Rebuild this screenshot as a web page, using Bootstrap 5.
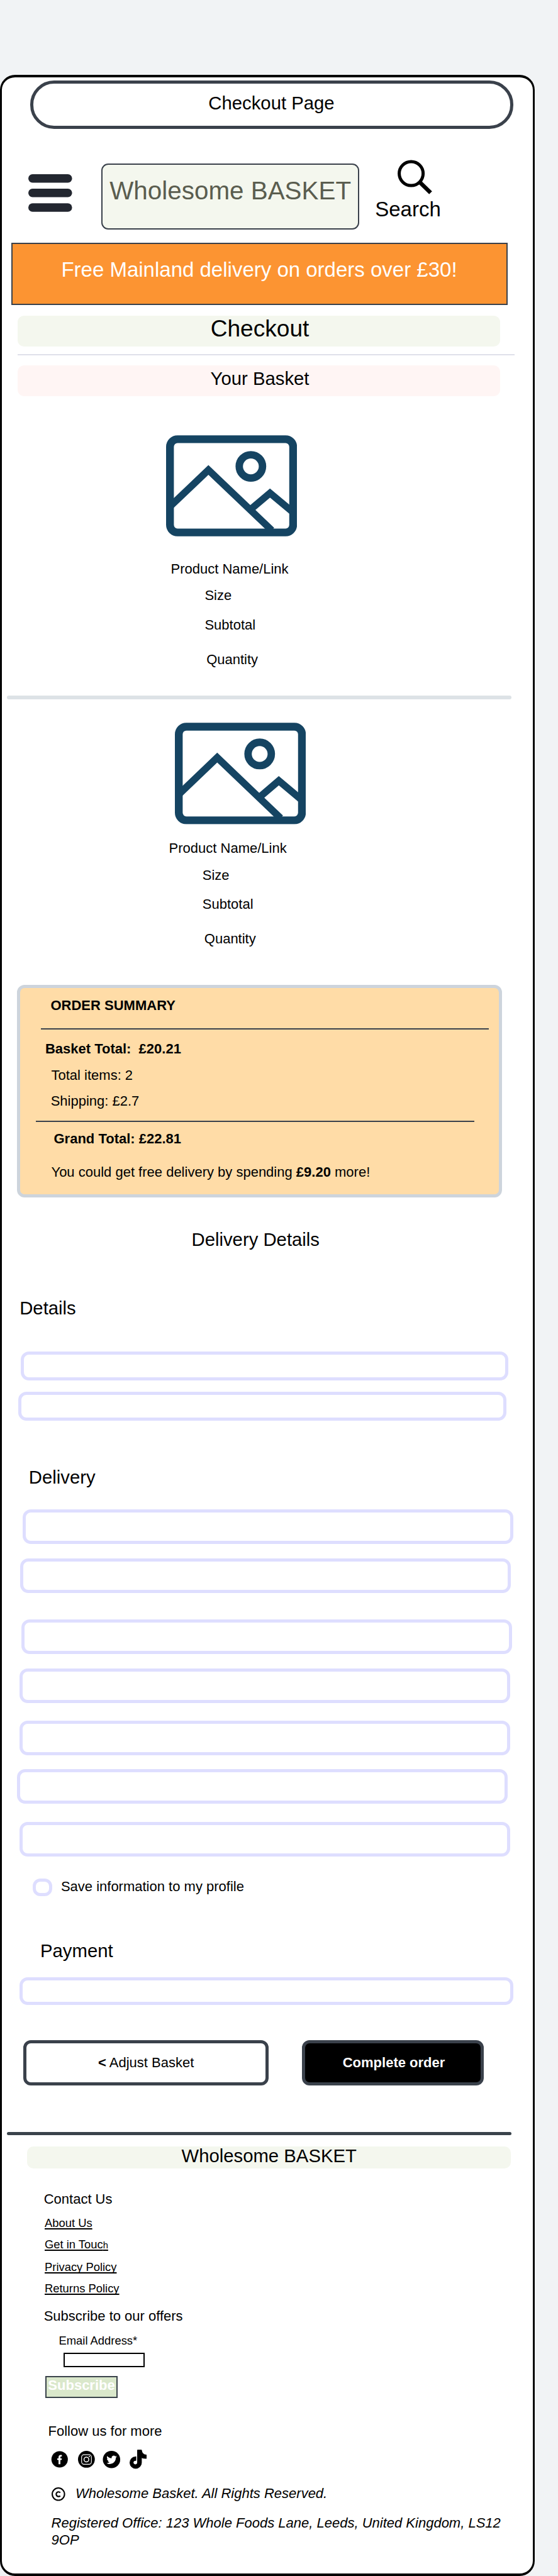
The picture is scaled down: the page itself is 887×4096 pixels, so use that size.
<!DOCTYPE html>
<html lang="en">
<head>
<meta charset="utf-8">
<meta name="viewport" content="width=device-width, initial-scale=1">
<title>Wholesome BASKET - Checkout Page</title>
<link href="https://cdn.jsdelivr.net/npm/bootstrap@5.3.0/dist/css/bootstrap.min.css" rel="stylesheet">
<style>
body{background:#f1f3f5;font-family:"Liberation Sans",Arial,sans-serif;font-size:22px;line-height:25px;color:#000;padding-top:119px;overflow-x:hidden}
.phone{width:850px;height:3977px;border:3px solid #000;border-top-width:4px;border-bottom-width:4px;border-radius:24px;background:#fff;padding-top:5px}
.phone>*,.summary>*{flex-shrink:0}
.t22,.t18,.t29{white-space:pre}
.t18{font-size:18.4px;line-height:21px}
.t29{font-size:29.3px;line-height:33px}
.page-pill{margin-left:44.5px;width:768px;height:77px;border:5px solid #3a414b;border-radius:38px;padding-top:14px}
.topbar{height:112px;margin-top:49px}
.burger{margin:22.5px 0 0 41.7px}
.brand{margin:6px 0 0 46.5px;width:410px;height:105px;border:2px solid #3a414b;border-radius:11px;background:#f4f7ee;color:#5a5d4f;font-size:40.4px;line-height:46px;padding-top:18px;white-space:nowrap}
.find{margin-left:25px;font-size:33px;line-height:37px}
.find svg{margin:0 0 5px 35px;display:block}
.promo{margin:20px 0 0 14.5px;width:789px;height:99px;border:2px solid #3a414b;background:#fc9432;color:#fff;font-size:33px;line-height:37px;padding-top:22px}
.strip{width:766.5px;height:49px;margin-left:25.3px;border-radius:10px;padding-left:3px}
.strip-a{margin-top:17px;background:#f4f7ee;font-size:37.1px;line-height:40px}
.hair{margin:12px 0 0 25.3px;width:790px;height:1.5px;background:#dfe0ea}
.strip-b{margin-top:16.5px;background:#fff5f4;padding-top:4px}
.pic{display:block}
.p1 .pic{margin:62.4px 0 0 260.6px}
.p1 .nm{margin:38.5px 0 0 268.5px}
.p1 .sz{margin:17px 0 0 322.4px}
.p1 .st{margin:22px 0 0 322.4px}
.p1 .qt{margin:30px 0 0 325.2px}
.bar{height:5.3px;border-radius:3px;margin-left:8.3px;width:801.5px}
.bar-l{margin-top:45.4px;background:#dde2e6}
.p2 .pic{margin:37.5px 0 0 275.3px}
.p2 .nm{margin:25.5px 0 0 265.6px}
.p2 .sz{margin:18px 0 0 318.8px}
.p2 .st{margin:21px 0 0 318.8px}
.p2 .qt{margin:30px 0 0 321.8px}
.summary{margin:60.7px 0 0 24.2px;width:770.4px;height:338px;border:5px solid #cdd4dc;border-radius:12px;background:#ffdca7}
.rule{height:2px;background:#3a414b}
.s1{margin:14.8px 0 0 48.3px}
.r1{margin:24px 0 0 32.8px;width:711.7px}
.s2{margin:18.2px 0 0 39.7px}
.s3{margin:16.6px 0 0 49.3px}
.s4{margin:16.2px 0 0 48.5px}
.r2{margin:18.8px 0 0 24.4px;width:697.6px}
.s5{margin:14.7px 0 0 53.3px}
.s6{margin:28.1px 0 0 49.3px}
.h-dd{margin:49.8px 0 0 301.5px}
.h-de{margin:76.3px 0 0 28.2px}
.field{border:5px solid #dedeff;border-radius:13px;background:#fff;padding:0;width:780px;height:55px}
.a1{margin:53.2px 0 0 29.8px;width:775.6px;height:46px}
.a2{margin:18.1px 0 0 25.9px;width:776.6px;height:46px}
.h-dl{margin:72.9px 0 0 42.8px}
.b1{margin:35.1px 0 0 32.6px}
.b2{margin:22.1px 0 0 29.2px}
.b3{margin:42.9px 0 0 30.9px}
.b4{margin:22.7px 0 0 27.5px}
.b5{margin:27.7px 0 0 27.5px}
.b6{margin:22.4px 0 0 24.2px}
.b7{margin:29px 0 0 27.5px}
.save{margin:34.6px 0 0 49px;height:28.2px;gap:14.3px}
.tick{width:30.6px;height:28.2px;border:5px solid #dedeff;border-radius:12px}
.h-pay{margin:70.5px 0 0 61px}
.c1{margin:25.1px 0 0 27.5px;width:785.8px;height:44.8px}
.acts{margin:55.6px 0 0 34.3px;gap:52.6px}
.act{height:71.8px;border:5px solid #3a414b;border-radius:12px;font-size:22px;line-height:25px;padding:18px 0 0;display:block;color:#000;background:#fff}
.act-1{width:389.8px}
.act-2{width:289.7px;background:#000;color:#fff;padding-left:3px}
.bar-d{margin-top:74.4px;background:#3a434b}
.foot-brand{margin:17.9px 0 0 40px;width:769.4px;height:34.2px;border-radius:10px;background:#f4f7ee;line-height:29px}
.f0{margin:36.3px 0 0 66.7px}
.flinks{margin:14.9px 0 0 68px}
.flinks a{color:#000;text-decoration:underline;text-decoration-thickness:2px;text-underline-offset:2px;text-decoration-skip-ink:none;margin-bottom:13px}
.flinks .tiny{font-size:14.7px}
.f1{margin:8.8px 0 0 66.7px}
.f2{margin:15.6px 0 0 90.5px}
.mail{margin:9.4px 0 0 98.3px;width:128.5px;height:23px;border:2px solid #000;background:#fff;padding:0}
.subs{margin:13.2px 0 0 69.4px;width:114.3px;height:35.2px;border:2px solid #3a434b;background:#dae8cb;color:#fff;font-weight:700;font-size:22px;line-height:25px;padding:0 0 5px}
.f3{margin:40.2px 0 0 73.5px}
.social{margin:16.2px 0 0 77.7px;display:block}
.copy{margin:25.5px 0 0 79.4px;height:25px;gap:16px;font-style:italic}
.copy svg{margin-top:3.2px}
.reg{margin:22.1px 0 0 78.6px;line-height:26.4px;font-style:italic;white-space:nowrap}
</style>
</head>
<body>
<svg width="0" height="0" class="position-absolute" aria-hidden="true">
  <symbol id="pic" viewBox="0 0 208.2 161" preserveAspectRatio="none">
    <g fill="none" stroke="#154462" stroke-width="12.4">
      <rect x="6.2" y="6.4" width="195.8" height="148.2" rx="12"/>
      <circle cx="134.8" cy="49.6" r="18.5" stroke-width="11.8"/>
      <path stroke-width="11.2" d="M8 111.8L67.3 55.3L168 151.2M133.8 118.6L165.2 92L200 121"/>
    </g>
  </symbol>
</svg>
<main class="phone d-flex flex-column">
  <div class="page-pill text-center t29">Checkout Page</div>

  <header class="topbar d-flex align-items-start">
    <svg class="burger flex-shrink-0" width="70" height="60" viewBox="0 0 70 60" fill="#232730"><rect width="69.6" height="13.4" rx="6.7"/><rect y="23.1" width="69.6" height="13.4" rx="6.7"/><rect y="46.3" width="69.6" height="13.4" rx="6.7"/></svg>
    <div class="brand text-center flex-shrink-0">Wholesome BASKET</div>
    <div class="find">
      <svg width="58" height="55" viewBox="0 0 58 55" fill="none" stroke="#000"><circle cx="22.6" cy="22" r="19" stroke-width="5"/><path d="M35 34.5L53.5 52.5" stroke-width="6.6"/></svg>
      Search
    </div>
  </header>

  <div class="promo text-center">Free Mainland delivery on orders over £30!</div>
  <div class="strip strip-a text-center">Checkout</div>
  <div class="hair"></div>
  <div class="strip strip-b text-center t29">Your Basket</div>

  <section class="p1 d-flex flex-column">
    <svg class="pic" width="208.2" height="161"><use href="#pic"/></svg>
    <div class="nm t22">Product Name/Link</div>
    <div class="sz t22">Size</div>
    <div class="st t22">Subtotal</div>
    <div class="qt t22">Quantity</div>
  </section>
  <div class="bar bar-l"></div>
  <section class="p2 d-flex flex-column">
    <svg class="pic" width="208.2" height="161.8"><use href="#pic"/></svg>
    <div class="nm t22">Product Name/Link</div>
    <div class="sz t22">Size</div>
    <div class="st t22">Subtotal</div>
    <div class="qt t22">Quantity</div>
  </section>

  <section class="summary d-flex flex-column">
    <div class="s1 t22 fw-bold">ORDER SUMMARY</div>
    <div class="rule r1"></div>
    <div class="s2 t22 fw-bold">Basket Total:  £20.21</div>
    <div class="s3 t22">Total items: 2</div>
    <div class="s4 t22">Shipping: £2.7</div>
    <div class="rule r2"></div>
    <div class="s5 t22 fw-bold">Grand Total: £22.81</div>
    <div class="s6 t22">You could get free delivery by spending <b>£9.20</b> more!</div>
  </section>

  <div class="h-dd t29">Delivery Details</div>
  <div class="h-de t29">Details</div>
  <input class="field a1" type="text" aria-label="Name">
  <input class="field a2" type="text" aria-label="Email">
  <div class="h-dl t29">Delivery</div>
  <input class="field b1" type="text" aria-label="Phone">
  <input class="field b2" type="text" aria-label="Street address 1">
  <input class="field b3" type="text" aria-label="Street address 2">
  <input class="field b4" type="text" aria-label="Town">
  <input class="field b5" type="text" aria-label="County">
  <input class="field b6" type="text" aria-label="Postcode">
  <input class="field b7" type="text" aria-label="Country">
  <div class="save d-flex align-items-start"><span class="tick"></span><span class="t22">Save information to my profile</span></div>
  <div class="h-pay t29">Payment</div>
  <input class="field c1" type="text" aria-label="Card">
  <div class="acts d-flex">
    <a class="act act-1 text-center text-decoration-none" href="#"><b>&lt;</b> Adjust Basket</a>
    <a class="act act-2 text-center text-decoration-none fw-bold" href="#">Complete order</a>
  </div>
  <div class="bar bar-d"></div>

  <footer class="d-flex flex-column align-items-start">
    <div class="foot-brand t29 text-center">Wholesome BASKET</div>
    <div class="f0 t22">Contact Us</div>
    <nav class="flinks d-flex flex-column align-items-start t18">
<a href="#">About Us</a><a href="#">Get in Touc<span class="tiny">h</span></a><a href="#">Privacy Policy</a><a href="#">Returns Policy</a></nav>
    <div class="f1 t22">Subscribe to our offers</div>
    <div class="f2 t18">Email Address*</div>
    <input class="mail" type="text" aria-label="Email Address">
    <button class="subs">Subscribe</button>
    <div class="f3 t22">Follow us for more</div>
    <svg class="social" width="154.1" height="32.3" viewBox="35 28 525 110">
      <circle cx="82" cy="84" r="44.5"/>
      <path fill="#fff" d="M76 111V88H69V79H76V73Q76 60 88 60H94V69H90Q86 69 86 73V79H94L93 88H86V111Z"/>
      <circle cx="227" cy="84" r="45.5"/>
      <g fill="none" stroke="#fff"><rect x="201" y="59" width="53" height="52" rx="13" stroke-width="4"/><circle cx="227" cy="85" r="13" stroke-width="5"/></g>
      <circle cx="243" cy="69" r="3.4" fill="#fff"/>
      <circle cx="363" cy="85" r="47"/>
      <path fill="#fff" transform="translate(336 57) scale(3.5)" d="M5.026 15c6.038 0 9.341-5.003 9.341-9.334 0-.14 0-.282-.006-.422A6.685 6.685 0 0 0 16 3.542a6.658 6.658 0 0 1-1.889.518 3.301 3.301 0 0 0 1.447-1.817 6.533 6.533 0 0 1-2.087.793A3.286 3.286 0 0 0 7.875 6.03a9.325 9.325 0 0 1-6.767-3.429 3.289 3.289 0 0 0 1.018 4.382A3.323 3.323 0 0 1 .64 6.575v.045a3.288 3.288 0 0 0 2.632 3.218 3.203 3.203 0 0 1-.865.115 3.23 3.23 0 0 1-.614-.057 3.283 3.283 0 0 0 3.067 2.277A6.588 6.588 0 0 1 .78 13.58a6.32 6.32 0 0 1-.78-.045A9.344 9.344 0 0 0 5.026 15z"/>
      <path stroke="#000" stroke-width="4" stroke-linejoin="round" d="M504 34H525Q528 59 551 61V79Q537 80 525 74V102A31 31 0 1 1 493 71L495 70V90A12 12 0 1 0 504 102Z"/>
    </svg>
    <div class="copy d-flex align-items-start">
      <svg width="21.6" height="21.6" viewBox="41.5 235.5 73 73" fill="none" stroke="#000" stroke-width="7"><circle cx="78" cy="272" r="33"/><path stroke-width="7.5" d="M88 264A12.5 12.5 0 1 0 88 281"/></svg>
      <span class="t22">Wholesome Basket. All Rights Reserved.</span>
    </div>
    <div class="reg">Registered Office: 123 Whole Foods Lane, Leeds, United Kingdom, LS12<br>9OP</div>
  </footer>
</main>
<script src="https://cdn.jsdelivr.net/npm/bootstrap@5.3.0/dist/js/bootstrap.bundle.min.js"></script>
</body>
</html>
